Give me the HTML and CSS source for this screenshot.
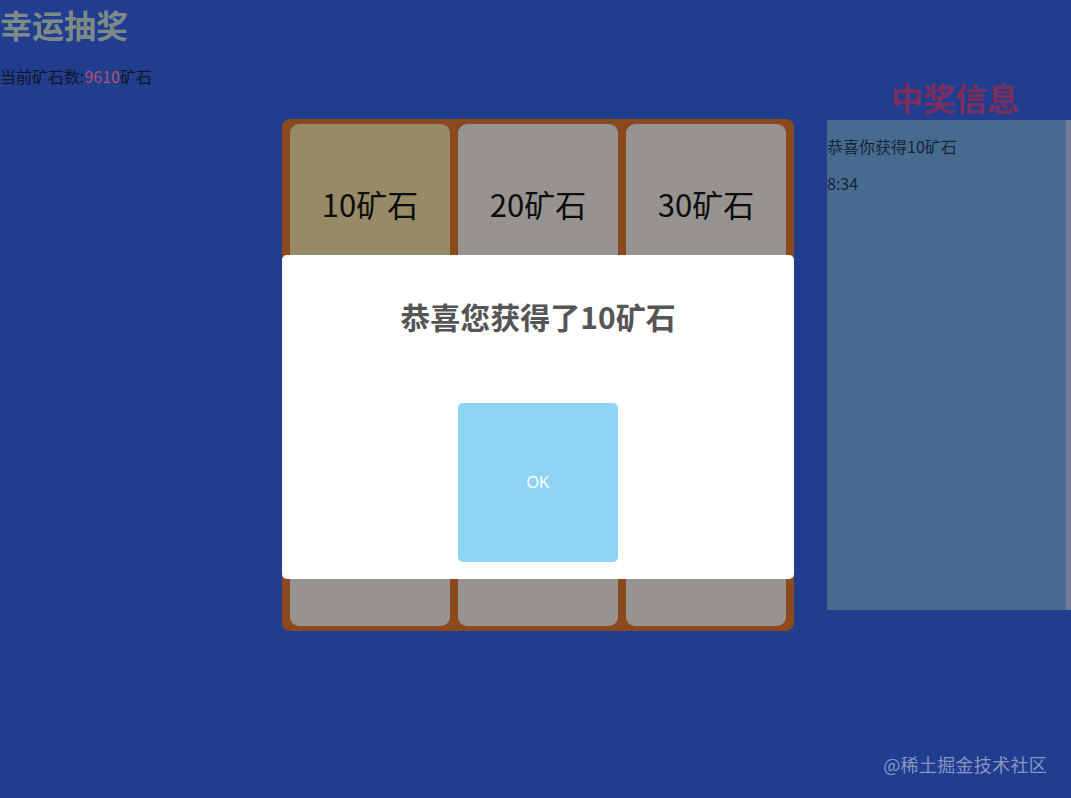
FILE: index.html
```html
<!DOCTYPE html>
<html lang="zh-CN">
<head>
<meta charset="utf-8">
<title>幸运抽奖</title>
<link rel="stylesheet" href="styles.css">
</head>
<body>
  <header class="top">
    <h1 class="title">幸运抽奖</h1>
    <p class="balance">当前矿石数:<span class="balance-num">9610</span>矿石</p>
  </header>

  <main class="stage">
    <div class="board-wrap">
      <div class="board">
        <div class="cell cell-active">10矿石</div>
        <div class="cell">20矿石</div>
        <div class="cell">30矿石</div>
        <div class="cell">80矿石</div>
        <div class="cell cell-start">抽奖</div>
        <div class="cell">40矿石</div>
        <div class="cell">70矿石</div>
        <div class="cell">60矿石</div>
        <div class="cell">50矿石</div>
      </div>

      <div class="dialog">
        <h2 class="dialog-title">恭喜您获得了10矿石</h2>
        <button class="dialog-ok" type="button">OK</button>
      </div>
    </div>

    <aside class="records">
      <h2 class="records-title">中奖信息</h2>
      <div class="records-list">
        <p class="record">恭喜你获得10矿石</p>
        <p class="record">8:34</p>
      </div>
    </aside>
  </main>

  <div class="watermark">@稀土掘金技术社区</div>
</body>
</html>
```

FILE: styles.css
```css
html, body {
  margin: 0;
  padding: 0;
}

body {
  background: #213d90;
  font-family: "Noto Sans CJK SC", "Noto Sans", sans-serif;
  color: #121212;
  min-height: 798px;
  overflow: hidden;
}

/* header */
.top {
  display: flex;
  flex-direction: column;
}

.title {
  margin: 0;
  font-size: 32px;
  line-height: 48px;
  font-weight: 700;
  color: #7e8a86;
}

.balance {
  margin: 18px 0 1px;
  font-size: 16px;
  line-height: 20px;
  color: #121620;
}

.balance-num {
  color: #b2516f;
}

/* main stage */
.stage {
  display: grid;
  grid-template-columns: 282px 512px 1fr;
  align-items: start;
}

.board-wrap {
  grid-column: 2;
  position: relative;
  width: 512px;
  margin-top: 32px;
}

.board {
  display: grid;
  grid-template-columns: repeat(3, 160px);
  grid-template-rows: repeat(3, 162px);
  gap: 8px;
  padding: 5px 8px;
  background: #8a4a1d;
  border-radius: 8px;
}

.cell {
  display: flex;
  align-items: center;
  justify-content: center;
  padding-bottom: 3px;
  background: #979391;
  border-radius: 9px;
  font-size: 31px;
  color: #0d0d0d;
}

.cell-active {
  background: #978a66;
}

/* result dialog over the board */
.dialog {
  position: absolute;
  left: 0;
  right: 0;
  top: 136px;
  height: 324px;
  background: #ffffff;
  border-radius: 5px;
  display: flex;
  flex-direction: column;
  align-items: center;
}

.dialog-title {
  margin: 41px 0 0;
  font-size: 30px;
  line-height: 40px;
  font-weight: 700;
  color: #555555;
}

.dialog-ok {
  margin-top: 67px;
  width: 160px;
  height: 159px;
  border: 0;
  border-radius: 5px;
  background: #8ed4f4;
  color: #ffffff;
  font-family: "Liberation Sans", Arial, sans-serif;
  font-size: 16px;
}

/* winners list */
.records {
  grid-column: 3;
  margin-left: 33px;
  display: flex;
  flex-direction: column;
}

.records-title {
  margin: 0 0 13px;
  font-size: 32px;
  line-height: 20px;
  font-weight: 700;
  color: #7b2d5c;
  text-align: center;
  padding-left: 12px;
}

.records-list {
  height: 490px;
  width: 239px;
  background: #466b8f;
  border-right: 5px solid #717b93;
  overflow: hidden;
}

.record {
  margin: 16px 0 17px;
  font-size: 16px;
  line-height: 20px;
  color: #17253a;
}

/* host watermark */
.watermark {
  position: absolute;
  right: 24px;
  top: 751px;
  font-size: 18px;
  line-height: 26px;
  letter-spacing: 0.3px;
  color: #8796c2;
}
```
